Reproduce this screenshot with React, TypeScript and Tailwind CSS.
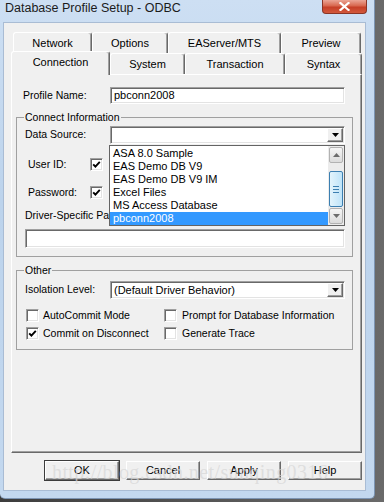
import React from "react";

const raised =
  "border border-t-white border-l-white border-r-[#696969] border-b-[#696969] shadow-[inset_-1px_-1px_0_#a0a0a0] bg-[#f0f0f0]";
const sunken =
  "border border-t-[#a0a0a0] border-l-[#a0a0a0] border-r-white border-b-white shadow-[inset_1px_1px_0_#696969,inset_-1px_-1px_0_#e3e3e3] bg-white";

const Tab = ({ label, className, active }: { label: string; className: string; active?: boolean }) => (
  <div
    className={`${className} ${
      active ? "relative z-10 -mt-[2px] h-[24px] pb-[2px]" : "h-full"
    } flex items-center justify-center rounded-t-[3px] border-t border-l border-r border-t-white border-l-white border-r-[#696969] bg-[#f0f0f0] shadow-[inset_-1px_0_0_#a0a0a0]`}
  >
    {label}
  </div>
);

const Check = ({ checked }: { checked?: boolean }) => (
  <div className={`w-[13px] h-[13px] shrink-0 flex items-center justify-center ${sunken}`}>
    {checked && (
      <svg width="9" height="9" viewBox="0 0 9 9">
        <polyline points="1.2,4.3 3.4,6.6 7.8,1.8" fill="none" stroke="#000" strokeWidth="1.9" />
      </svg>
    )}
  </div>
);

const Arrow = ({ up, color = "#000" }: { up?: boolean; color?: string }) => (
  <svg width="7" height="4" viewBox="0 0 7 4">
    <polygon points={up ? "0,4 7,4 3.5,0" : "0,0 7,0 3.5,4"} fill={color} />
  </svg>
);

const Combo = ({ text, className }: { text?: string; className: string }) => (
  <div className={`${className} h-[18px] flex items-center pl-[3px] pr-[1px] ${sunken}`}>
    <span className="flex-1 text-[11px]">{text}</span>
    <div className={`w-[16px] h-[14px] flex items-center justify-center ${raised}`}>
      <Arrow />
    </div>
  </div>
);

const Button = ({ label, def }: { label: string; def?: boolean }) => (
  <div
    className={`w-[74px] h-[19px] flex items-center justify-center text-[11px] ${raised} ${
      def ? "outline outline-1 outline-[#3c3c3c]" : ""
    }`}
  >
    {label}
  </div>
);

const items = ["ASA 8.0 Sample", "EAS Demo DB V9", "EAS Demo DB V9 IM", "Excel Files", "MS Access Database", "pbconn2008"];

export default function App() {
  return (
    <div className="relative w-[384px] h-[502px] overflow-hidden bg-[linear-gradient(to_right,#3d3d3d,#6a6a6a)] font-['Liberation_Sans',Arial,sans-serif] text-[10.5px] text-black">
      <div className="w-[375px] h-[499px] flex flex-col pl-[3px] pr-[8px] pb-[7px] rounded-b-[5px] border-r border-b border-[#7d95b3] bg-[linear-gradient(to_bottom,#cddff3,#bcd3ec_40%,#c3d8ef)]">
        {/* title bar */}
        <div className="h-[22px] flex items-start justify-between pl-[2px]">
          <span className="text-[12.5px] leading-[17px] text-[#1b1b1b]">Database Profile Setup - ODBC</span>
          <div className="w-[45px] h-[14px] -mr-[1px] flex items-center justify-center rounded-b-[4px] border border-t-0 border-[#8a3526] bg-[linear-gradient(to_bottom,#eba595,#d8674e_45%,#c63f27_55%,#d2593c)]">
            <svg width="11" height="9" viewBox="0 0 11 9">
              <path d="M1.5 1 L9.5 8 M9.5 1 L1.5 8" stroke="#fff" strokeWidth="2.2" strokeLinecap="square" />
            </svg>
          </div>
        </div>

        {/* client area */}
        <div className="flex-1 flex flex-col bg-[#f0f0f0] border border-[#a9bcd4] pt-[9px]">
          <div className="ml-[7px] w-[351px]">
            <div className="flex h-[21px] ml-[2px] text-[11px]">
              <Tab label="Network" className="w-[79px]" />
              <Tab label="Options" className="w-[76px]" />
              <Tab label="EAServer/MTS" className="w-[113px]" />
              <Tab label="Preview" className="w-[80px]" />
            </div>
            <div className="flex items-start h-[21px] text-[11px]">
              <Tab label="Connection" className="w-[99px]" active />
              <Tab label="System" className="w-[75px]" />
              <Tab label="Transaction" className="w-[100px]" />
              <Tab label="Syntax" className="w-[77px]" />
            </div>

            {/* tab panel */}
            <div className="h-[379px] border border-t-white border-l-white border-r-[#696969] border-b-[#696969] shadow-[inset_-1px_-1px_0_#a0a0a0]">
              <div className="mt-[12px] h-[17px] flex items-center">
                <span className="ml-[11px] w-[87px]">Profile Name:</span>
                <div className={`w-[235px] h-[17px] flex items-center pl-[3px] text-[11px] ${sunken}`}>pbconn2008</div>
              </div>

              <fieldset className="mt-[7px] ml-[4px] mr-[8px] border border-[#a0a0a0] pb-[8px]">
                <legend className="ml-[7px] px-[1px] leading-[13px]">Connect Information</legend>
                <div className="mt-[2px] h-[18px] flex items-center">
                  <span className="ml-[8px] w-[85px]">Data Source:</span>
                  <Combo className="w-[235px]" />
                </div>
                <div className="mt-[14px] h-[13px] flex items-center">
                  <span className="ml-[11px] w-[62px]">User ID:</span>
                  <Check checked />
                </div>
                <div className="mt-[15px] h-[13px] flex items-center">
                  <span className="ml-[11px] w-[62px]">Password:</span>
                  <Check checked />
                </div>
                <div className="mt-[10px] h-[13px] flex items-center">
                  <span className="ml-[8px] whitespace-nowrap">Driver-Specific Parameters:</span>
                </div>
                <div className={`mt-[7px] ml-[8px] w-[320px] h-[19px] ${sunken}`} />
              </fieldset>

              <fieldset className="mt-[7px] ml-[4px] mr-[8px] border border-[#a0a0a0] pb-[9px]">
                <legend className="ml-[7px] px-[1px] leading-[13px]">Other</legend>
                <div className="mt-[4px] h-[18px] flex items-center">
                  <span className="ml-[8px] w-[85px]">Isolation Level:</span>
                  <Combo className="w-[235px]" text="(Default Driver Behavior)" />
                </div>
                <div className="mt-[10px] h-[13px] flex items-center">
                  <div className="ml-[9px] w-[138px] flex items-center gap-[4px]">
                    <Check />
                    <span>AutoCommit Mode</span>
                  </div>
                  <div className="flex items-center gap-[5px]">
                    <Check />
                    <span>Prompt for Database Information</span>
                  </div>
                </div>
                <div className="mt-[5px] h-[13px] flex items-center">
                  <div className="ml-[9px] w-[138px] flex items-center gap-[4px]">
                    <Check checked />
                    <span>Commit on Disconnect</span>
                  </div>
                  <div className="flex items-center gap-[5px]">
                    <Check />
                    <span>Generate Trace</span>
                  </div>
                </div>
              </fieldset>
            </div>

            <div className="mt-[8px] flex justify-end gap-[7px]">
              <Button label="OK" def />
              <Button label="Cancel" />
              <Button label="Apply" />
              <Button label="Help" />
            </div>
          </div>
        </div>
      </div>

      {/* open drop-down list */}
      <div className="absolute left-[109px] top-[145px] w-[236px] h-[81px] flex bg-white border border-[#646464] text-[11px]">
        <div className="flex-1 pt-[1px]">
          {items.map((it, i) => (
            <div
              key={it}
              className={`h-[13px] leading-[13px] pl-[3px] whitespace-nowrap ${
                i === items.length - 1 ? "bg-[#3399ff] text-white" : ""
              }`}
            >
              {it}
            </div>
          ))}
        </div>
        <div className="w-[16px] flex flex-col bg-[#ececec] pt-[1px] pb-[1px]">
          <div className="h-[16px] mx-[1px] flex items-center justify-center rounded-[2px] border border-[#b2b2b2] bg-[linear-gradient(to_bottom,#f5f5f5,#dcdcdc)]">
            <Arrow up color="#6c6c6c" />
          </div>
          <div className="h-[8px]" />
          <div className="h-[36px] mx-[1px] flex flex-col items-center justify-center gap-[2px] rounded-[2px] border border-[#3c7fb1] bg-[linear-gradient(to_right,#e3f4fc,#bfe4f9)]">
            <div className="w-[6px] h-[1px] bg-[#3c7fb1]" />
            <div className="w-[6px] h-[1px] bg-[#3c7fb1]" />
            <div className="w-[6px] h-[1px] bg-[#3c7fb1]" />
          </div>
          <div className="flex-1" />
          <div className="h-[16px] mx-[1px] flex items-center justify-center rounded-[2px] border border-[#b2b2b2] bg-[linear-gradient(to_bottom,#f5f5f5,#dcdcdc)]">
            <Arrow color="#6c6c6c" />
          </div>
        </div>
      </div>

      {/* watermark */}
      <div className="absolute left-[52px] top-[457px] font-['Liberation_Serif',serif] text-[20px] tracking-[0.4px] text-[#d6d6d6]/70 whitespace-nowrap pointer-events-none">
        http://blog.csdn.net/sunqing0316
      </div>
    </div>
  );
}
